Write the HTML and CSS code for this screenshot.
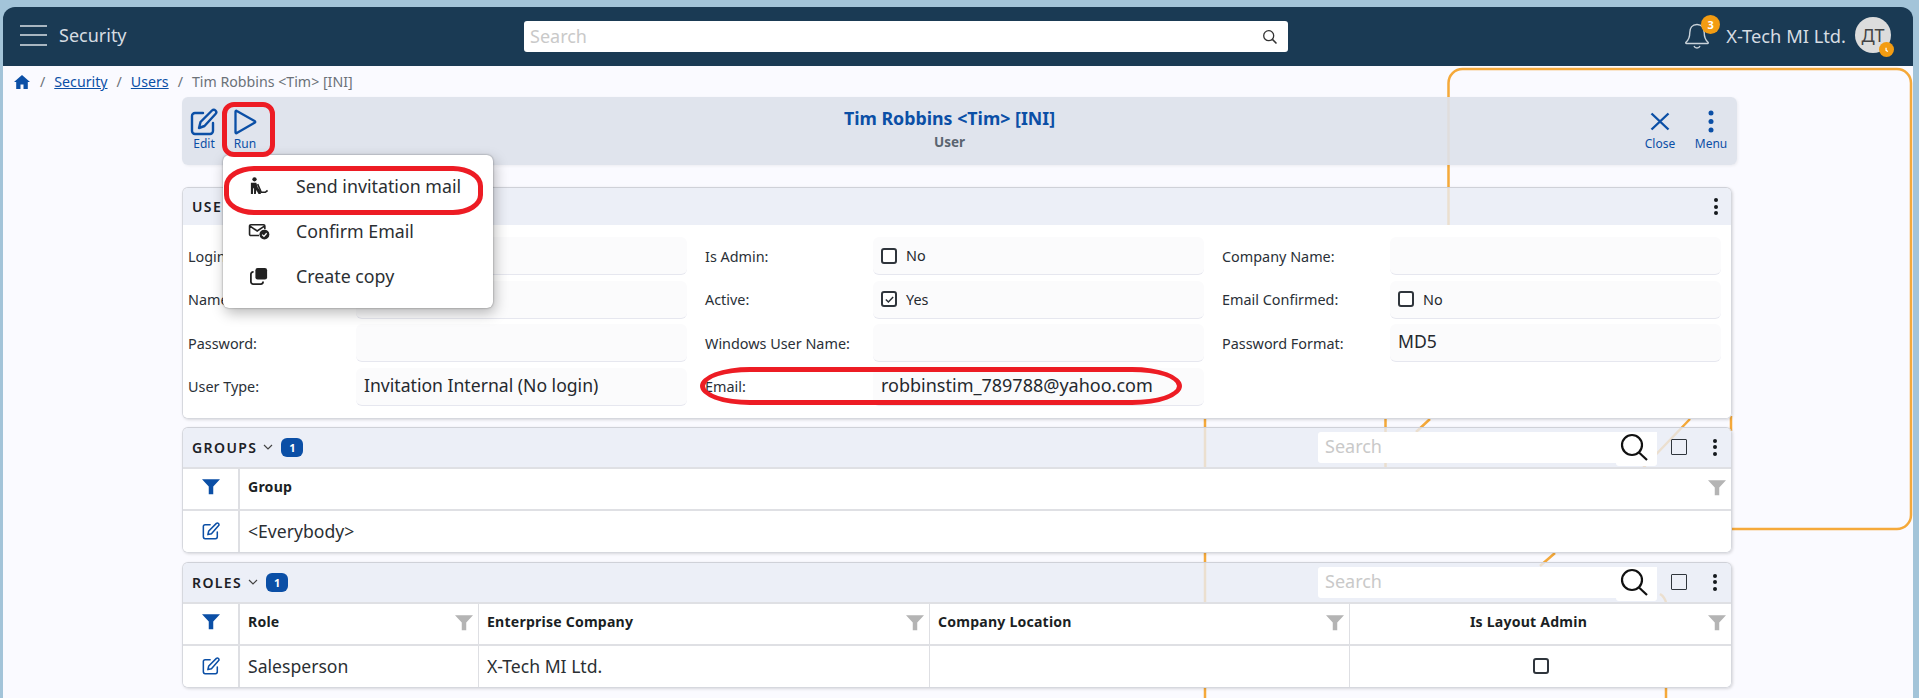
FILE: index.html
```html
<!DOCTYPE html>
<html lang="en">
<head>
<meta charset="utf-8">
<title>Tim Robbins - Security</title>
<link rel="stylesheet" href="styles.css">
</head>
<body>
<div class="app">
  <header class="topbar">
    <div class="topbar-left">
      <div class="burger"><span></span><span></span><span></span></div>
      <span class="module">Security</span>
    </div>
    <div class="topsearch">
      <span class="placeholder">Search</span>
      <svg class="topsearch-icon" viewBox="0 0 16 16"><circle cx="6.7" cy="6.7" r="5" fill="none" stroke="#333" stroke-width="1.3"/><path d="M10.4 10.4L14.5 14.5" stroke="#333" stroke-width="1.5"/></svg>
    </div>
    <div class="topbar-right">
      <div class="bell">
        <svg viewBox="0 0 26 28" width="26" height="28"><path d="M13 3.500c-5 0-7.200 3.700-7.200 8 0 5-1.200 7.500-3.800 9.700-.6.600-.3 1.300.5 1.300h21c.8 0 1.100-.7.500-1.300-2.600-2.200-3.800-4.700-3.800-9.700 0-4.300-2.200-8-7.200-8zM10 25c.6 1.500 1.700 2 3 2s2.400-.5 3-2" fill="none" stroke="#c9d2d9" stroke-width="1.400"/></svg>
        <span class="bell-badge">3</span>
      </div>
      <span class="company">X-Tech MI Ltd.</span>
      <div class="avatar">ДТ
        <span class="avatar-badge"><svg viewBox="0 0 10 10" width="9" height="9"><path d="M4.500 3v3l2 1.300" fill="none" stroke="#fff" stroke-width="1.400"/></svg></span>
      </div>
    </div>
  </header>

  <div class="page">
    <svg class="diagram" viewBox="0 0 1919 632" width="1919" height="632" fill="none" stroke="#f5a93a" stroke-width="2.500">
      <path d="M1448.500 160V17a14 14 0 0 1 14-14H1897a14 14 0 0 1 14 14V449a14 14 0 0 1-14 14H1700"/>
      <path d="M1205 350V632M1385.500 350V402M1430 353L1416 366M1731 350V365M1690 353L1643 402M1555 487L1540 500M1660 528Q1665 531 1666 537M1666 620V632"/>
    </svg>
    <nav class="crumbs">
      <svg class="home" viewBox="0 0 16 14" width="16" height="14"><path d="M8 0L0 7h2.200v7h4.300V9.500h3V14h4.300V7H16z" fill="#0b4fa6"/></svg>
      <span class="sep">/</span><a href="#">Security</a>
      <span class="sep">/</span><a href="#">Users</a>
      <span class="sep">/</span><span class="current">Tim Robbins &lt;Tim&gt; [INI]</span>
    </nav>

    <main class="main">
      <section class="toolbar">
        <div class="tools">
          <button class="tool">
            <svg viewBox="0 0 28 28" width="28" height="28" fill="none" stroke="#0b4fa6" stroke-width="2.400"><path d="M13 5H5a3 3 0 0 0-3 3v15a3 3 0 0 0 3 3h15a3 3 0 0 0 3-3v-8" stroke-linecap="round"/><path d="M9 20l1.500-6L22 2.500a2.500 2.500 0 0 1 3.500 0 2.500 2.500 0 0 1 0 3.500L14.500 18z" stroke-linejoin="round"/></svg>
            <span>Edit</span>
          </button>
          <button class="tool">
            <svg viewBox="0 0 28 28" width="28" height="28" fill="none" stroke="#0b4fa6" stroke-width="2.300"><path d="M4.500 3.500v21a.8.800 0 0 0 1.300.6L24 14.500a.8.800 0 0 0 0-1.200L5.800 2.900a.8.800 0 0 0-1.300.6z" stroke-linejoin="round"/></svg>
            <span>Run</span>
          </button>
        </div>
        <div class="heading">
          <h1>Tim Robbins &lt;Tim&gt; [INI]</h1>
          <p>User</p>
        </div>
        <div class="tools tools-right">
          <button class="tool tool-close">
            <svg viewBox="0 0 28 28" width="28" height="28" stroke="#0b4fa6" stroke-width="2.400"><path d="M5.500 5.500L22.500 21.500M22.500 5.500L5.500 21.500"/></svg>
            <span>Close</span>
          </button>
          <button class="tool tool-menu">
            <svg viewBox="0 0 28 28" width="28" height="28" fill="#0b4fa6"><circle cx="14" cy="5" r="2.500"/><circle cx="14" cy="13.500" r="2.500"/><circle cx="14" cy="22" r="2.500"/></svg>
            <span>Menu</span>
          </button>
        </div>
      </section>

      <section class="card card-user">
        <div class="card-head">
          <span class="card-title">USER</span>
          <span class="kebab"><i></i><i></i><i></i></span>
        </div>
        <div class="form">
          <div class="field"><label>Login:</label><div class="val"></div></div>
          <div class="field"><label>Is Admin:</label><div class="val small"><span class="cb"></span>No</div></div>
          <div class="field"><label>Company Name:</label><div class="val"></div></div>
          <div class="field"><label>Name:</label><div class="val"></div></div>
          <div class="field"><label>Active:</label><div class="val small"><span class="cb"><svg viewBox="0 0 15 15" width="11" height="11"><path d="M2.500 7.500l3.500 3.500 6.500-7" fill="none" stroke="#2a3038" stroke-width="2"/></svg></span>Yes</div></div>
          <div class="field"><label>Email Confirmed:</label><div class="val small"><span class="cb"></span>No</div></div>
          <div class="field"><label>Password:</label><div class="val"></div></div>
          <div class="field"><label>Windows User Name:</label><div class="val"></div></div>
          <div class="field"><label>Password Format:</label><div class="val">MD5</div></div>
          <div class="field"><label>User Type:</label><div class="val">Invitation Internal (No login)</div></div>
          <div class="field"><label>Email:</label><div class="val val-email">robbinstim_789788@yahoo.com</div></div>
        </div>
      </section>

      <section class="card">
        <div class="card-head">
          <span class="card-title">GROUPS</span>
          <svg class="chev" viewBox="0 0 10 6" width="10" height="6"><path d="M1 1l4 4 4-4" fill="none" stroke="#444" stroke-width="1.200"/></svg>
          <span class="count">1</span>
          <div class="grid-tools">
            <div class="gsearch">
              <span class="placeholder">Search</span>
              <span class="gsearch-btn"><svg viewBox="0 0 28 28" width="28" height="28" fill="none" stroke="#111" stroke-width="2.200"><circle cx="12" cy="12" r="10"/><path d="M19 19.500L27 27"/></svg></span>
            </div>
            <span class="cb cb-head"></span>
            <span class="kebab"><i></i><i></i><i></i></span>
          </div>
        </div>
        <div class="row row-head groups-cols">
          <div class="cell icon-cell"><svg viewBox="0 0 20 18" width="18" height="17"><path d="M0 1h20l-7.500 8v8.500h-5V9z" fill="#0b4fa6"/></svg></div>
          <div class="cell">Group<svg class="filter" viewBox="0 0 20 18" width="18" height="17"><path d="M0 1h20l-7.500 8v8.500h-5V9z" fill="#b4b4b4"/></svg></div>
        </div>
        <div class="row row-body groups-cols">
          <div class="cell icon-cell">
            <svg viewBox="0 0 20 20" width="18" height="18" fill="none" stroke="#0b4fa6" stroke-width="1.700"><path d="M9 3H3.500A2 2 0 0 0 1.500 5v11.500a2 2 0 0 0 2 2H15a2 2 0 0 0 2-2V11" stroke-linecap="round"/><path d="M6.500 14l1-4L16 1.500a1.800 1.800 0 0 1 2.500 2.500L10.500 13z" stroke-linejoin="round"/></svg>
          </div>
          <div class="cell">&lt;Everybody&gt;</div>
        </div>
      </section>

      <section class="card">
        <div class="card-head">
          <span class="card-title">ROLES</span>
          <svg class="chev" viewBox="0 0 10 6" width="10" height="6"><path d="M1 1l4 4 4-4" fill="none" stroke="#444" stroke-width="1.200"/></svg>
          <span class="count">1</span>
          <div class="grid-tools">
            <div class="gsearch">
              <span class="placeholder">Search</span>
              <span class="gsearch-btn"><svg viewBox="0 0 28 28" width="28" height="28" fill="none" stroke="#111" stroke-width="2.200"><circle cx="12" cy="12" r="10"/><path d="M19 19.500L27 27"/></svg></span>
            </div>
            <span class="cb cb-head"></span>
            <span class="kebab"><i></i><i></i><i></i></span>
          </div>
        </div>
        <div class="row row-head roles-cols">
          <div class="cell icon-cell"><svg viewBox="0 0 20 18" width="18" height="17"><path d="M0 1h20l-7.500 8v8.500h-5V9z" fill="#0b4fa6"/></svg></div>
          <div class="cell">Role<svg class="filter" viewBox="0 0 20 18" width="18" height="17"><path d="M0 1h20l-7.500 8v8.500h-5V9z" fill="#b4b4b4"/></svg></div>
          <div class="cell">Enterprise Company<svg class="filter" viewBox="0 0 20 18" width="18" height="17"><path d="M0 1h20l-7.500 8v8.500h-5V9z" fill="#b4b4b4"/></svg></div>
          <div class="cell">Company Location<svg class="filter" viewBox="0 0 20 18" width="18" height="17"><path d="M0 1h20l-7.500 8v8.500h-5V9z" fill="#b4b4b4"/></svg></div>
          <div class="cell cell-center">Is Layout Admin<svg class="filter" viewBox="0 0 20 18" width="18" height="17"><path d="M0 1h20l-7.500 8v8.500h-5V9z" fill="#b4b4b4"/></svg></div>
        </div>
        <div class="row row-body roles-cols">
          <div class="cell icon-cell">
            <svg viewBox="0 0 20 20" width="18" height="18" fill="none" stroke="#0b4fa6" stroke-width="1.700"><path d="M9 3H3.500A2 2 0 0 0 1.500 5v11.500a2 2 0 0 0 2 2H15a2 2 0 0 0 2-2V11" stroke-linecap="round"/><path d="M6.500 14l1-4L16 1.500a1.800 1.800 0 0 1 2.500 2.500L10.500 13z" stroke-linejoin="round"/></svg>
          </div>
          <div class="cell">Salesperson</div>
          <div class="cell">X-Tech MI Ltd.</div>
          <div class="cell"></div>
          <div class="cell cell-center"><span class="cb"></span></div>
        </div>
      </section>
    </main>

    <div class="popup">
      <div class="popup-item">
        <svg viewBox="0 0 20 20" width="18" height="18" fill="#222"><circle cx="5" cy="2.600" r="2.400"/><path d="M1 6.500h6l1.500 5 3.500 4.500V19H9.500L7 14.500 6.500 19H4.500V13L3.500 12 3.300 19H1z"/><path d="M8.500 8l4 9h4.500l2.500-2" fill="none" stroke="#222" stroke-width="1.800"/></svg>
        Send invitation mail
      </div>
      <div class="popup-item">
        <svg class="icon-mail" viewBox="0 0 24 20" width="22" height="18" fill="none" stroke="#222" stroke-width="1.800"><path d="M12 15H3a1.500 1.500 0 0 1-1.500-1.500v-9A1.500 1.500 0 0 1 3 3h14a1.500 1.500 0 0 1 1.500 1.500V8M2 4.500L10 10l8-5.500"/><circle cx="18" cy="14" r="5.500" fill="#222" stroke="none"/><path d="M15.500 14l2 2 3-3.500" stroke="#fff" stroke-width="1.400"/></svg>
        Confirm Email
      </div>
      <div class="popup-item">
        <svg viewBox="0 0 20 20" width="18" height="18" fill="#222"><rect x="6" y="1" width="13" height="13" rx="2.500"/><path d="M4 5.500H3.500A2.500 2.500 0 0 0 1 8v8.500A2.500 2.500 0 0 0 3.500 19H12a2.500 2.500 0 0 0 2.500-2.500V16" fill="none" stroke="#222" stroke-width="2"/></svg>
        Create copy
      </div>
    </div>

    <div class="mark mark-run"></div>
    <div class="mark mark-send"></div>
    <div class="mark mark-email"></div>
  </div>
</div>
</body>
</html>
```

FILE: styles.css
```css
* { box-sizing: border-box; }
html, body { height: 100%; }
body {
  margin: 0;
  overflow: hidden;
  background: #a3c4d9;
  font-family: "Noto Sans", "Open Sans", sans-serif;
  color: #25292e;
}
.app { margin: 7px 6px 0 3px; height: 691px; display: flex; flex-direction: column; }

.topbar {
  flex: none;
  height: 59px;
  background: #1a3a54;
  border-radius: 12px 12px 0 0;
  display: grid;
  grid-template-columns: 521px 764px 1fr;
  align-items: center;
  color: #d6dce2;
}
.topbar-left { display: flex; align-items: center; padding: 0 0 3px 17px; }
.burger { width: 27px; display: flex; flex-direction: column; gap: 7.500px; margin-right: 12px; }
.burger span { display: block; height: 2px; background: #a9b6c1; }
.module { font-size: 18px; }
.topsearch {
  height: 31px;
  background: #fff;
  border-radius: 3px;
  display: flex;
  align-items: center;
  justify-content: space-between;
  padding: 0 10px 0 6px;
}
.placeholder { color: #c9c9c9; font-size: 18px; padding-bottom: 2px; }
.topsearch-icon { width: 16px; height: 16px; }
.topbar-right { display: flex; align-items: center; justify-content: flex-end; padding: 0 22px 3px 0; }
.bell { position: relative; width: 26px; height: 28px; margin-right: 16px; margin-top: -1px; }
.bell-badge {
  position: absolute; left: 17px; top: -6px;
  width: 19px; height: 19px; border-radius: 50%;
  background: #f39c12; color: #fff;
  font-size: 11px; font-weight: 700; line-height: 19px; text-align: center;
}
.company { font-size: 18.300px; margin-right: 9px; white-space: nowrap; }
.avatar {
  position: relative; width: 36px; height: 36px; border-radius: 50%;
  background: #dcdcdc; color: #444; font-size: 18px; line-height: 36px; text-align: center;
}
.avatar-badge {
  position: absolute; left: 24px; top: 25px; width: 15px; height: 15px;
  border-radius: 50%; background: #f39c12; display: flex; align-items: center; justify-content: center;
}

.page { position: relative; flex: 1; background: #fafaff; min-height: 0; }
.diagram { position: absolute; left: -3px; top: 0; z-index: 0; }
.crumbs {
  position: relative; z-index: 1;
  height: 31px; padding-left: 11px;
  display: flex; align-items: center;
  font-size: 14.200px; color: #6b7178;
}
.crumbs a { color: #0b4fa6; }
.crumbs .sep { margin: 0 9px; }
.crumbs .sep:first-of-type { margin-left: 10px; }
.current { color: #6b7178; }
.home { display: block; }

.main { position: relative; z-index: 1; width: 1555px; margin-left: 179px; }

.toolbar {
  height: 68px;
  background: rgba(221, 226, 236, .92);
  border-radius: 6px;
  box-shadow: 1px 1px 3px rgba(0,0,0,.06);
  display: grid;
  grid-template-columns: 1fr auto 1fr;
  align-items: start;
  margin-bottom: 22px;
}
.tools { display: flex; padding: 11px 0 0 0; }
.tools-right { justify-content: flex-end; padding: 11px 4px 0 0; }
.tool {
  width: 44px; padding: 0; background: none; border: 0;
  display: flex; flex-direction: column; align-items: center;
  font-family: inherit; font-size: 12px; color: #0b4fa6; line-height: 16px;
}
.tool + .tool { margin-left: -3px; }
.tool svg { display: block; height: 28px; }
.tools-right .tool + .tool { margin-left: -2px; }
.tool-close { margin-right: 9px; }
.heading { text-align: center; padding: 9px 20px 0 0; }
.heading h1 { margin: 0; font-size: 17.800px; line-height: 25px; font-weight: 700; color: #0b4fa6; }
.heading p { margin: 0; font-size: 13.500px; line-height: 22px; font-weight: 700; color: #5a6470; }

.card {
  width: 1550px; margin-bottom: 9px;
  border: 1px solid #d6d8de; border-top-color: #cfd1d8;
  border-radius: 6px;
  box-shadow: 1px 1px 3px rgba(0,0,0,.14);
  overflow: hidden;
}
.card-user { margin-bottom: 8px; }
.card-head {
  height: 39px; padding: 0 8px 0 9px;
  background: rgba(232, 236, 245, .8);
  display: flex; align-items: center;
}
.card-user .card-head { height: 37px; justify-content: space-between; padding-right: 13px; }
.card-title { font-size: 14px; font-weight: 600; letter-spacing: 1.400px; color: #1c2126; margin-right: 6px; }
.chev { margin-right: 8px; }
.count {
  width: 22px; height: 19px; border-radius: 6px; background: #0b4fa6; color: #fff;
  font-size: 11px; font-weight: 700; line-height: 19px; text-align: center;
}
.kebab { display: flex; flex-direction: column; gap: 2.500px; width: 4px; }
.kebab i { display: block; width: 4px; height: 4px; border-radius: 50%; background: #15191d; }

.form {
  background: #fff;
  padding: 12px 0 12px 5px;
  display: grid;
  grid-template-columns: repeat(3, 517px);
  row-gap: 5.670px;
}
.field { display: grid; grid-template-columns: 168px 331px; align-items: center; height: 38px; }
.field label { font-size: 14.400px; color: #2a3037; }
.val {
  height: 38px; padding: 0 5px 3px 8px;
  background: #fbfbfc; border-radius: 6px;
  border-bottom: 1px solid #e6e7ef;
  display: flex; align-items: center;
  font-size: 17.600px; color: #25292e;
}
.val-email { font-size: 18px; }
.val.small { font-size: 14.400px; padding-bottom: 0; }
.val.small .cb { margin-right: 9px; }
.cb {
  width: 16px; height: 16px; flex: none;
  border: 2px solid #2f353c; border-radius: 3px; background: #fff;
  display: inline-flex; align-items: center; justify-content: center;
}
.cb-head { width: 16px; height: 16px; border-radius: 1px; background: none; border-width: 1.500px; }

.grid-tools { margin-left: auto; display: flex; align-items: center; padding-right: 9px; }
.gsearch {
  position: relative; width: 339px; height: 31px; background: #fff; border-radius: 3px;
  display: flex; align-items: center; padding-left: 7px; margin-right: 14px;
}
.gsearch-btn {
  position: absolute; right: 0; top: 0; width: 41px; height: 34px; background: #fff;
  border-radius: 0 0 3px 3px; display: flex; align-items: center; justify-content: center; padding: 0 6px 3px 0;
}
.grid-tools .kebab { margin-left: 26px; margin-right: -3px; }

.row { display: grid; background: #fff; }
.groups-cols { grid-template-columns: 56px 1fr; }
.roles-cols { grid-template-columns: 56px 239px 451px 420px 1fr; }
.row-head { height: 44px; border-top: 2px solid #dfe0e4; border-bottom: 2px solid #dfe0e4; }
.row-body { height: 41px; }
.cell {
  position: relative; display: flex; align-items: center; padding: 0 8px;
  border-left: 1px solid #dedfe3;
  font-size: 17.600px; color: #2b2f33;
}
.cell:first-child { border-left: 0; }
.row-head .cell { font-size: 14.100px; font-weight: 700; color: #1b1f24; letter-spacing: .2px; padding-bottom: 5px; }
.icon-cell { justify-content: center; border-right: 1px solid #dedfe3; padding: 0; }
.icon-cell + .cell { border-left: 1px solid #dedfe3; }
.cell-center { justify-content: center; }
.row-head .cell-center { padding-right: 32px; }
.filter { position: absolute; right: 5px; top: 10px; }

.popup {
  position: absolute; z-index: 3; left: 220px; top: 89px; width: 270px; height: 153px;
  background: #fff; border-radius: 6px;
  box-shadow: 0 0 2px rgba(0,0,0,.45), 2px 5px 14px rgba(0,0,0,.28);
  padding-top: 8px;
}
.popup-item {
  position: relative; height: 45px; display: flex; align-items: center;
  padding-left: 73px; font-size: 17.800px; color: #2b2f33;
}
.popup-item svg { position: absolute; left: 27px; top: 14px; }
.popup-item .icon-mail { left: 25px; }
.mark { position: absolute; z-index: 4; border: 5px solid #ed1c24; pointer-events: none; }
.mark-run { left: 219px; top: 36px; width: 53px; height: 55px; border-radius: 12px; }
.mark-send { left: 221px; top: 100px; width: 259px; height: 49px; border-radius: 30px / 20px; }
.mark-email { left: 697px; top: 301px; width: 482px; height: 38px; border-radius: 50px / 19px; }
```
